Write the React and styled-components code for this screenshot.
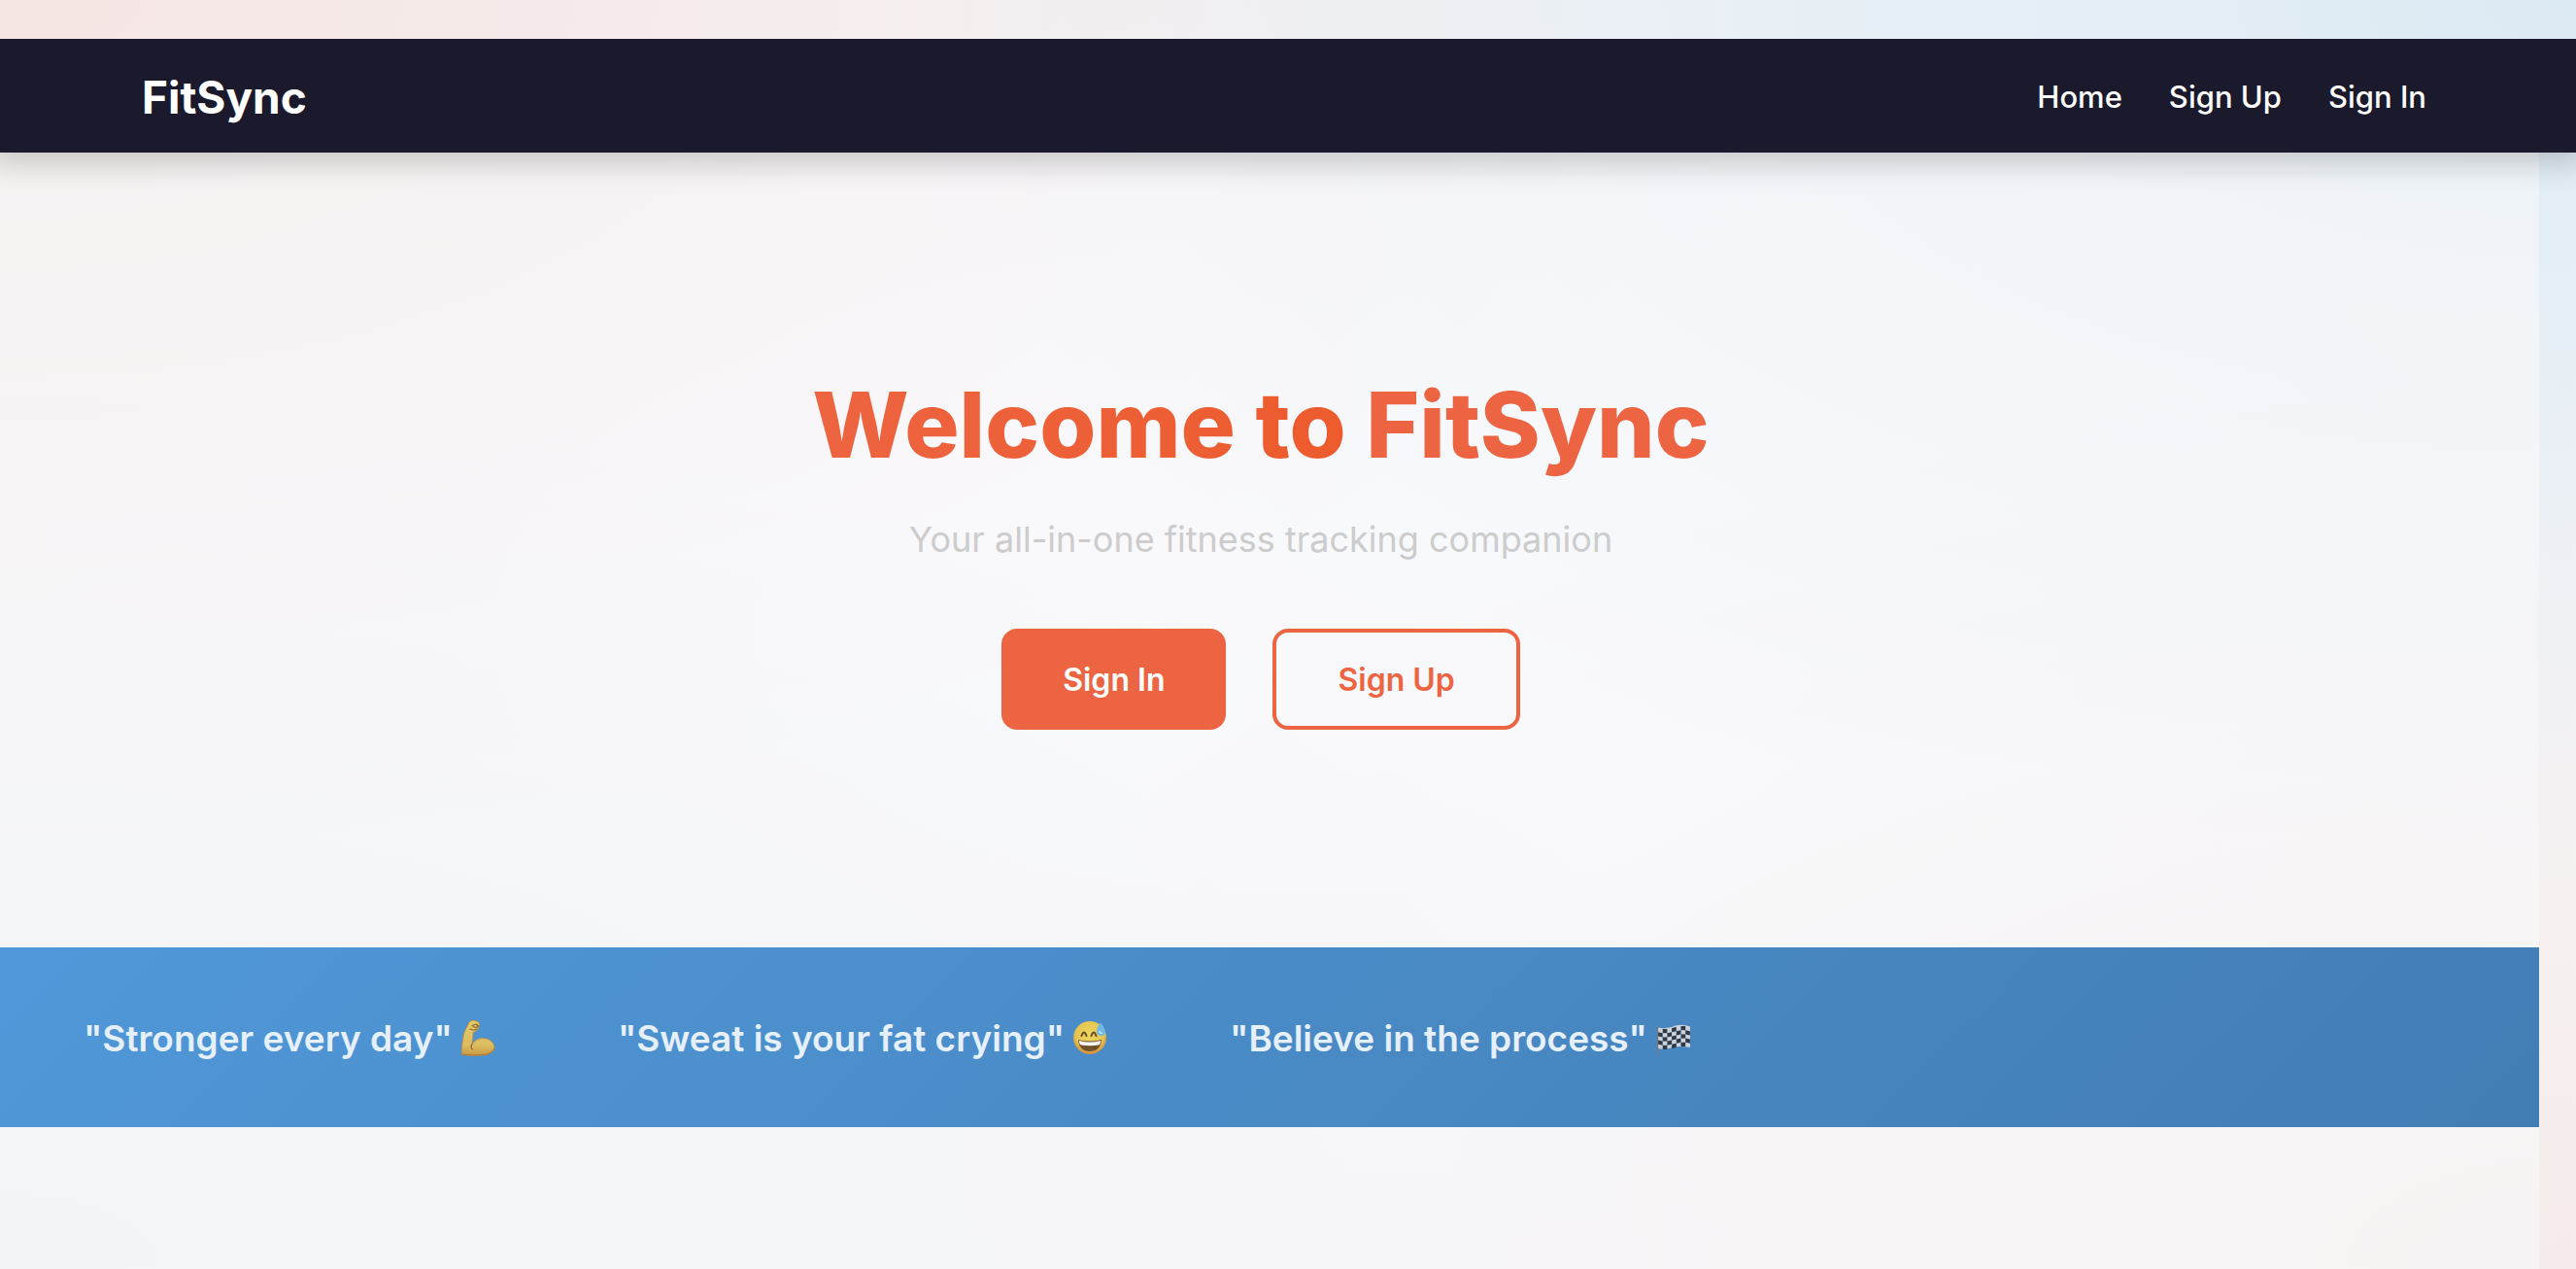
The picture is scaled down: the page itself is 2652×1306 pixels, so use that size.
import React from "react";
import styled, { createGlobalStyle } from "styled-components";

const GlobalStyle = createGlobalStyle`
  *, *::before, *::after { box-sizing: border-box; }
  body {
    margin: 0;
    font-family: Inter, "Liberation Sans", sans-serif;
    -webkit-font-smoothing: antialiased;
  }
  h1, p, ul { margin: 0; padding: 0; }
`;

const Page = styled.div`
  display: flex;
  flex-direction: column;
  min-height: 100vh;
  padding-top: 40px;
  overflow-x: clip;
  background:
    radial-gradient(ellipse at top left, rgba(236, 98, 64, 0.12), transparent 48%),
    radial-gradient(ellipse at top right, rgba(74, 160, 210, 0.15), transparent 48%),
    radial-gradient(ellipse at bottom left, rgba(74, 120, 190, 0.07), transparent 50%),
    radial-gradient(ellipse at bottom right, rgba(236, 98, 64, 0.08), transparent 50%),
    radial-gradient(ellipse at center, #f9fafe 20%, #f6f7f9 70%);
`;

const NavBar = styled.nav`
  position: relative;
  display: flex;
  align-items: center;
  justify-content: space-between;
  height: 117px;
  padding: 2px 154px 0 146px;
  background: #1a1a2c;
  box-shadow: 0 4px 28px 8px rgba(0, 0, 0, 0.18);
  clip-path: inset(0 0 -60px 0);
`;

const Logo = styled.a`
  font-size: 46px;
  font-weight: 700;
  line-height: 56px;
  color: #fff;
  text-decoration: none;
`;

const NavList = styled.ul`
  display: flex;
  gap: 48px;
  list-style: none;
`;

const NavLink = styled.a`
  font-size: 31px;
  font-weight: 500;
  line-height: 40px;
  color: #fff;
  text-decoration: none;
`;

const Main = styled.main`
  flex: 1;
  margin-right: 38px;
  background: rgba(248, 249, 250, 0.6);
`;

const Hero = styled.section`
  display: flex;
  flex-direction: column;
  align-items: center;
  padding: 222px 18px 224px 0;
  text-align: center;
`;

const Title = styled.h1`
  font-size: 94px;
  font-weight: 800;
  line-height: 116px;
  color: transparent;
  background: linear-gradient(90deg, #ed6441, #ed5b2d 60%, #ec6441 61%);
  background-clip: text;
`;

const Subtitle = styled.p`
  margin-top: 32px;
  font-size: 36px;
  font-weight: 400;
  line-height: 56px;
  color: #ccc;
`;

const Actions = styled.div`
  display: flex;
  gap: 48px;
  margin-top: 64px;
`;

const Button = styled.button`
  height: 104px;
  padding: 0 63px;
  border: ${(p) => (p.$outline ? "4px solid #ec6441" : "0")};
  border-radius: 16px;
  background: ${(p) => (p.$outline ? "transparent" : "#ec6441")};
  color: ${(p) => (p.$outline ? "#ec6441" : "#fff")};
  font-family: inherit;
  font-size: 32px;
  font-weight: 600;
  cursor: pointer;
`;

const Quotes = styled.section`
  display: flex;
  align-items: center;
  gap: 124px;
  height: 185px;
  padding: 2px 86px 0;
  overflow: hidden;
  white-space: nowrap;
  background: linear-gradient(135deg, #5098d9, #427db3);
`;

const Quote = styled.p`
  display: flex;
  align-items: center;
  gap: 8px;
  font-size: 37px;
  font-weight: 600;
  line-height: 48px;
  color: #e6f0fa;
`;

const Emoji = styled.svg`
  width: 38px;
  height: 38px;
`;

const Biceps = () => (
  <Emoji viewBox="0 0 38 38" role="img" aria-label="Flexed biceps">
    <defs>
      <linearGradient id="arm" x1="0" y1="0" x2="0" y2="1">
        <stop offset="0" stopColor="#e4cb68" />
        <stop offset="0.7" stopColor="#dcbd61" />
        <stop offset="1" stopColor="#c99745" />
      </linearGradient>
    </defs>
    <path d="M8.500 3 Q10 0 14 0 L19 2 Q20 5 18.500 8 Q17.500 11 13 12.500 Q13 19 11.500 26 Q15 18.500 23 18.500 Q33 19 35 27 Q35 35 23 36 Q12 37 1.500 35.500 Q1 27 3.500 14 Q6 8 8.500 3Z" fill="url(#arm)" stroke="#c28c3c" strokeWidth="0.800" />
    <path d="M12 5.500 L16 4 L18.500 6 L16 7.500 L13 6.500 M10 9 Q13 11 17 9 M11.500 25 Q10.500 29 12.500 30" fill="none" stroke="#8a6230" strokeWidth="1.200" strokeLinecap="round" strokeLinejoin="round" />
    <path d="M2 35 Q14 36.500 24 35.500 Q32 34.500 35 29" fill="none" stroke="#ad7736" strokeWidth="1" />
  </Emoji>
);

const SweatSmile = () => (
  <Emoji viewBox="0 0 38 38" role="img" aria-label="Grinning face with sweat">
    <defs>
      <radialGradient id="face" cx="0.5" cy="0.4" r="0.6">
        <stop offset="0" stopColor="#ecd75e" />
        <stop offset="0.7" stopColor="#e6c452" />
        <stop offset="1" stopColor="#cc8c3f" />
      </radialGradient>
    </defs>
    <circle cx="18" cy="18" r="17" fill="url(#face)" />
    <path d="M9.500 16 Q12 9 14.500 16 M19.500 16 Q22 9 24.500 16" fill="none" stroke="#6f5326" strokeWidth="2.200" strokeLinecap="round" />
    <path d="M6 20 Q18 23 30 20 Q29 32 18 32 Q7 32 6 20Z" fill="#73502c" />
    <path d="M7 21 Q18 24 29 21 Q29 25 27 25.500 Q18 27 9 25.500 Q7 25 7 21Z" fill="#f4f5f2" />
    <path d="M29 2 Q25 8 25 12 Q26 16 30 16 Q34 15.500 34 11.500 Q33 7 29 2Z" fill="#6db8e8" />
    <path d="M28 11 Q28 14 31 13" fill="none" stroke="#c6e6f8" strokeWidth="1.500" />
  </Emoji>
);

const flagCells = [];
for (let row = 0; row < 5; row += 1) {
  for (let col = 0; col < 7; col += 1) {
    if ((row + col) % 2 === 1) flagCells.push([col, row]);
  }
}
const wave = [2, 3, 3, 2, 1, 0, 0, 1];

const CheckeredFlag = () => (
  <Emoji viewBox="0 0 38 38" role="img" aria-label="Chequered flag">
    <path d="M3 7.500 Q9 9 17 7 Q26 3 36 6.500 V28 Q27 26 18 28 Q9 31 3 29Z" fill="#cbd3df" />
    {flagCells.map(([c, r]) => {
      const x = 3 + c * 4.7;
      const y1 = 6 + r * 4.2 + wave[c];
      const y2 = 6 + r * 4.2 + wave[c + 1];
      return <path key={`${c}-${r}`} d={`M${x} ${y1}L${x + 4.7} ${y2}V${y2 + 4.2}L${x} ${y1 + 4.2}Z`} fill="#303946" />;
    })}
    <path d="M2.500 6 V35" stroke="#707b85" strokeWidth="1.500" strokeLinecap="round" />
  </Emoji>
);

const links = ["Home", "Sign Up", "Sign In"];
const quotes = [
  ["Stronger every day", Biceps],
  ["Sweat is your fat crying", SweatSmile],
  ["Believe in the process", CheckeredFlag],
];

export default function App() {
  return (
    <Page>
      <GlobalStyle />
      <NavBar>
        <Logo href="#home">FitSync</Logo>
        <NavList>
          {links.map((label) => (
            <li key={label}>
              <NavLink href={`#${label.toLowerCase().replace(" ", "-")}`}>{label}</NavLink>
            </li>
          ))}
        </NavList>
      </NavBar>
      <Main>
        <Hero>
          <Title>Welcome to FitSync</Title>
          <Subtitle>Your all-in-one fitness tracking companion</Subtitle>
          <Actions>
            <Button type="button">Sign In</Button>
            <Button type="button" $outline>Sign Up</Button>
          </Actions>
        </Hero>
        <Quotes>
          {quotes.map(([text, Icon]) => (
            <Quote key={text}>
              "{text}"
              <Icon />
            </Quote>
          ))}
        </Quotes>
      </Main>
    </Page>
  );
}
